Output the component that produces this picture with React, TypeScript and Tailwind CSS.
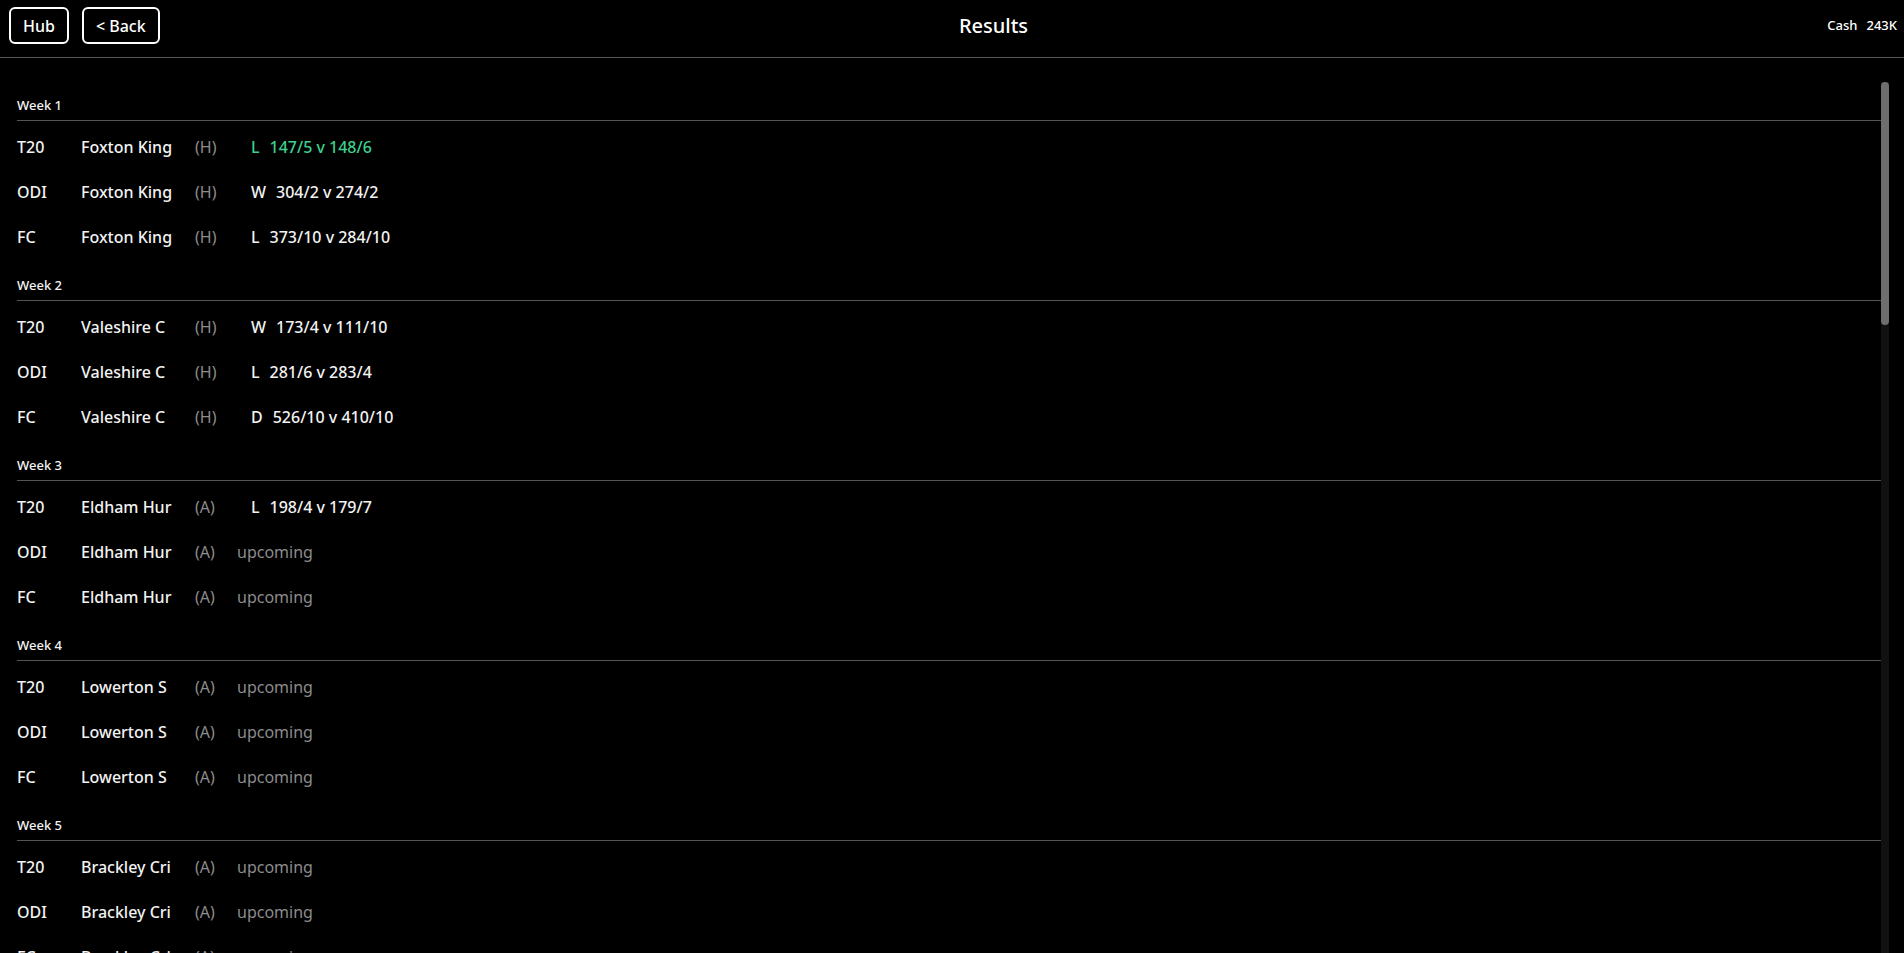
import React from 'react'

type Format = 'T20' | 'ODI' | 'FC'

interface Fixture {
  format: Format
  venue: 'H' | 'A'
  result?: { outcome: 'W' | 'L' | 'D'; score: string; highlight?: boolean }
}

interface Week {
  week: number
  opponent: string
  fixtures: Fixture[]
}

const opponents: { name: string; venue: 'H' | 'A' }[] = [
  { name: 'Foxton King', venue: 'H' },
  { name: 'Valeshire C', venue: 'H' },
  { name: 'Eldham Hur', venue: 'A' },
  { name: 'Lowerton S', venue: 'A' },
  { name: 'Brackley Cri', venue: 'A' },
  { name: 'Hartwell Ro', venue: 'H' },
  { name: 'Marston Vale', venue: 'H' },
  { name: 'Ashby Town', venue: 'A' },
  { name: 'Kingsmere', venue: 'H' },
  { name: 'Thornbury C', venue: 'A' },
  { name: 'Redcliffe U', venue: 'H' },
  { name: 'Oakham Fal', venue: 'A' },
  { name: 'Westbrook', venue: 'H' },
  { name: 'Stanmore Cri', venue: 'A' },
  { name: 'Foxton King', venue: 'A' },
  { name: 'Valeshire C', venue: 'A' },
  { name: 'Eldham Hur', venue: 'H' },
]

const played: Record<string, Fixture['result']> = {
  '1-T20': { outcome: 'L', score: '147/5 v 148/6', highlight: true },
  '1-ODI': { outcome: 'W', score: '304/2 v 274/2' },
  '1-FC': { outcome: 'L', score: '373/10 v 284/10' },
  '2-T20': { outcome: 'W', score: '173/4 v 111/10' },
  '2-ODI': { outcome: 'L', score: '281/6 v 283/4' },
  '2-FC': { outcome: 'D', score: '526/10 v 410/10' },
  '3-T20': { outcome: 'L', score: '198/4 v 179/7' },
}

const weeks: Week[] = opponents.map((o, i) => ({
  week: i + 1,
  opponent: o.name,
  fixtures: (['T20', 'ODI', 'FC'] as Format[]).map((format) => ({
    format,
    venue: o.venue,
    result: played[`${i + 1}-${format}`],
  })),
}))

const App = () => {
  return (
    <div
      className="flex h-screen flex-col overflow-hidden bg-black text-[#f2f2f2]"
      style={{ fontFamily: '"Noto Sans", "Open Sans", sans-serif' }}
    >
      {/* Header */}
      <header className="flex items-center border-b border-[#555] pl-[9px] pr-[7px] pt-[7px] pb-[13px]">
        <div className="flex gap-[13px]">
          <button className="flex h-[37px] items-center rounded-[6px] border-2 border-white px-3 text-[16px] font-medium text-white">
            Hub
          </button>
          <button className="flex h-[37px] items-center rounded-[6px] border-2 border-white px-3 text-[16px] font-medium text-white">
            &lt; Back
          </button>
        </div>
        <h1 className="flex-1 text-center text-[20px] font-medium text-white">Results</h1>
        <div className="flex gap-[9px] text-[13px] font-medium text-white">
          <span>Cash</span>
          <span>243K</span>
        </div>
      </header>

      {/* List + scrollbar */}
      <div className="mt-[24px] mr-[15px] flex min-h-0 flex-1">
        <div className="min-w-0 flex-1 overflow-hidden pl-[17px] pt-[14px]">
          {weeks.map((w) => (
            <section key={w.week} className="pb-[17px]">
              <div className="border-b border-[#555] pb-[6px] text-[13px] font-medium leading-[18px] text-[#f2f2f2]">
                Week {w.week}
              </div>
              <div className="pt-[3px]">
                {w.fixtures.map((f) => (
                  <div
                    key={f.format}
                    className="grid h-[45px] grid-cols-[64px_114px_42px_1fr] items-center text-[16px]"
                  >
                    <span className="font-medium text-[#f2f2f2]">{f.format}</span>
                    <span className="font-medium text-[#f2f2f2]">{w.opponent}</span>
                    <span className="text-[#8c8c8c]">({f.venue})</span>
                    {f.result ? (
                      <span
                        className={
                          'flex gap-[10px] pl-[14px] font-medium ' +
                          (f.result.highlight ? 'text-[#3ecf8e]' : 'text-[#f2f2f2]')
                        }
                      >
                        <span>{f.result.outcome}</span>
                        <span>{f.result.score}</span>
                      </span>
                    ) : (
                      <span className="text-[#8c8c8c]">upcoming</span>
                    )}
                  </div>
                ))}
              </div>
            </section>
          ))}
        </div>
        <div className="w-2 shrink-0 bg-[#111]">
          <div className="h-[243px] rounded-full bg-[#6e6e6e]" />
        </div>
      </div>
    </div>
  )
}

export default App
